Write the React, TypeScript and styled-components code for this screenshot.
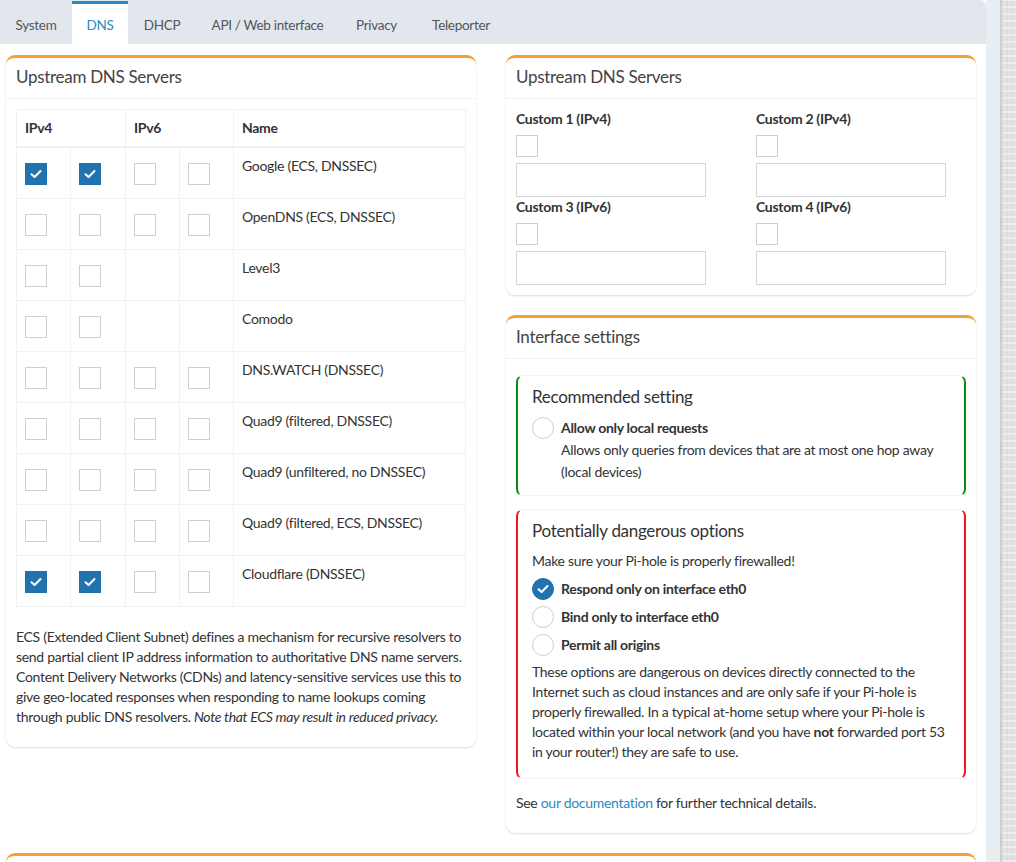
import * as React from "react";
import styled, { createGlobalStyle } from "styled-components";

const GlobalStyle = createGlobalStyle`
  html, body {
    margin: 0;
    padding: 0;
  }
  body {
    font-family: "Source Sans Pro", Lato, "Liberation Sans", sans-serif;
    font-size: 14px;
    line-height: 20px;
    letter-spacing: -0.3px;
    color: #333;
    background: #fff;
  }
  * {
    box-sizing: border-box;
  }
`;

const Page = styled.div`
  display: flex;
  width: 1016px;
  height: 862px;
  overflow: hidden;
`;

const Main = styled.div`
  width: 986px;
  background: #fff;
`;

const Gutter = styled.div`
  width: 14px;
  background: #e9eef3;
`;

const ScrollStrip = styled.div`
  width: 16px;
  border-left: 2px solid #cfcfcf;
  background-color: #e2e2e2;
  background-image: repeating-linear-gradient(
      0deg,
      rgba(255, 255, 255, 0.4) 0 2px,
      transparent 2px 7px
    ),
    repeating-linear-gradient(90deg, rgba(0, 0, 0, 0.05) 0 1px, transparent 1px 5px);
`;

const TabBar = styled.div`
  display: flex;
  height: 44px;
  background: #e2e7ee;
  border-top-right-radius: 6px;
`;

const Tab = styled.div<{ $w: number; $active?: boolean }>`
  width: ${(p) => p.$w}px;
  display: flex;
  align-items: center;
  justify-content: center;
  margin-top: 1px;
  padding-top: 1px;
  font-size: 13.5px;
  color: ${(p) => (p.$active ? "#2a8bc0" : "#555")};
  background: ${(p) => (p.$active ? "#fff" : "transparent")};
  border-top: 3px solid ${(p) => (p.$active ? "#2a8bc0" : "transparent")};
`;

const Content = styled.div`
  display: grid;
  grid-template-columns: 470px 470px;
  column-gap: 30px;
  row-gap: 20px;
  padding: 11px 0 0 6px;
  align-items: start;
`;

const Column = styled.div`
  display: flex;
  flex-direction: column;
  gap: 20px;
`;

const Box = styled.div<{ $wide?: boolean }>`
  background: #fff;
  border-top: 3px solid #f59f32;
  border-radius: 9px;
  box-shadow: 0 1px 2px rgba(0, 0, 0, 0.14);
  grid-column: ${(p) => (p.$wide ? "1 / span 2" : "auto")};
  min-height: ${(p) => (p.$wide ? "60px" : "0")};
`;

const BoxHeader = styled.div`
  padding: 8px 10px 10px;
  font-size: 17px;
  line-height: 22px;
  color: #444;
  border-bottom: 1px solid #f1f1f1;
`;

const BoxBody = styled.div`
  padding: 10px;
`;

const Table = styled.table`
  width: 450px;
  border-collapse: collapse;
  margin-bottom: 20px;
  border: 1px solid #f1f1f1;
`;

const Th = styled.th`
  text-align: left;
  padding: 8px;
  font-weight: 700;
  color: #333;
  border: 1px solid #f1f1f1;
  border-bottom: 2px solid #f1f1f1;
`;

const Td = styled.td<{ $w?: number }>`
  padding: 8px;
  vertical-align: top;
  border: 1px solid #f1f1f1;
  width: ${(p) => (p.$w ? `${p.$w}px` : "auto")};
`;

const Check = styled.span<{ $on?: boolean }>`
  display: flex;
  align-items: center;
  justify-content: center;
  width: 22px;
  height: 22px;
  margin: 7px 0 5px;
  border: 1px solid ${(p) => (p.$on ? "#1f6fa9" : "#d3cec7")};
  background: ${(p) => (p.$on ? "#2173b0" : "#fff")};
`;

const Radio = styled.span<{ $on?: boolean }>`
  flex: none;
  display: flex;
  align-items: center;
  justify-content: center;
  width: 22px;
  height: 22px;
  border-radius: 50%;
  border: 1px solid ${(p) => (p.$on ? "#1f6fa9" : "#d3cec7")};
  background: ${(p) => (p.$on ? "#2173b0" : "#fff")};
`;

const Tick = () => (
  <svg width="12" height="10" viewBox="0 0 12 10">
    <path
      d="M1.5 5.2 L4.6 8 L10.5 2"
      fill="none"
      stroke="#fff"
      strokeWidth="2"
      strokeLinecap="round"
      strokeLinejoin="round"
    />
  </svg>
);

const Note = styled.p`
  margin: 0 0 10px;
  white-space: nowrap;
`;

const CustomGrid = styled.div`
  display: grid;
  grid-template-columns: 240px 240px;
`;

const CustomField = styled.div`
  display: flex;
  flex-direction: column;
`;

const FieldLabel = styled.div`
  font-weight: 700;
  font-size: 14px;
  line-height: 20px;
  color: #333;
`;

const FieldCheck = styled(Check)`
  margin: 6px 0 6px;
`;

const TextInput = styled.div`
  width: 190px;
  height: 34px;
  border: 1px solid #d2d6de;
`;

const Callout = styled.div<{ $color: string; $top: number; $bottom: number }>`
  margin-top: ${(p) => p.$top}px;
  border: 1px solid #f2f2f2;
  border-left: 2px solid ${(p) => p.$color};
  border-right: 2px solid ${(p) => p.$color};
  border-radius: 7px;
  padding: 10px 14px ${(p) => p.$bottom}px;
  white-space: nowrap;
`;

const CalloutTitle = styled.div`
  font-size: 17px;
  line-height: 22px;
  color: #333;
  margin-bottom: 9px;
`;

const OptionRow = styled.div`
  display: flex;
  gap: 7px;
  margin-bottom: 6px;

  &:last-child {
    margin-bottom: 0;
  }
`;

const OptionText = styled.div`
  display: flex;
  flex-direction: column;
`;

const OptionLabel = styled.div`
  font-weight: 700;
  line-height: 22px;
`;

const OptionDesc = styled.div`
  line-height: 22px;
`;

const Plain = styled.p`
  margin: 0;
  line-height: 20px;
`;

const Warning = styled.p`
  margin: 0 0 7px;
  line-height: 20px;
`;

const Link = styled.a`
  color: #2a8bc0;
  text-decoration: none;
`;

const Footer = styled.p`
  margin: 14px 0 10px;
  line-height: 20px;
`;

type Server = { name: string; v4: [boolean, boolean]; v6: [boolean, boolean] | null };

const servers: Server[] = [
  { name: "Google (ECS, DNSSEC)", v4: [true, true], v6: [false, false] },
  { name: "OpenDNS (ECS, DNSSEC)", v4: [false, false], v6: [false, false] },
  { name: "Level3", v4: [false, false], v6: null },
  { name: "Comodo", v4: [false, false], v6: null },
  { name: "DNS.WATCH (DNSSEC)", v4: [false, false], v6: [false, false] },
  { name: "Quad9 (filtered, DNSSEC)", v4: [false, false], v6: [false, false] },
  { name: "Quad9 (unfiltered, no DNSSEC)", v4: [false, false], v6: [false, false] },
  { name: "Quad9 (filtered, ECS, DNSSEC)", v4: [false, false], v6: [false, false] },
  { name: "Cloudflare (DNSSEC)", v4: [true, true], v6: [false, false] },
];

const tabs = [
  { label: "System", w: 72 },
  { label: "DNS", w: 56, active: true },
  { label: "DHCP", w: 68 },
  { label: "API / Web interface", w: 143 },
  { label: "Privacy", w: 75 },
  { label: "Teleporter", w: 94 },
];

const customs = ["Custom 1 (IPv4)", "Custom 2 (IPv4)", "Custom 3 (IPv6)", "Custom 4 (IPv6)"];

const Box1 = ({ on }: { on: boolean }) => <Check $on={on}>{on && <Tick />}</Check>;

export default function App() {
  return (
    <Page>
      <GlobalStyle />
      <Main>
        <TabBar>
          {tabs.map((t) => (
            <Tab key={t.label} $w={t.w} $active={t.active}>
              {t.label}
            </Tab>
          ))}
        </TabBar>
        <Content>
          <Box>
            <BoxHeader>Upstream DNS Servers</BoxHeader>
            <BoxBody>
              <Table>
                <thead>
                  <tr>
                    <Th colSpan={2}>IPv4</Th>
                    <Th colSpan={2}>IPv6</Th>
                    <Th>Name</Th>
                  </tr>
                </thead>
                <tbody>
                  {servers.map((s) => (
                    <tr key={s.name}>
                      <Td $w={54}>
                        <Box1 on={s.v4[0]} />
                      </Td>
                      <Td $w={55}>
                        <Box1 on={s.v4[1]} />
                      </Td>
                      <Td $w={54}>{s.v6 && <Box1 on={s.v6[0]} />}</Td>
                      <Td $w={54}>{s.v6 && <Box1 on={s.v6[1]} />}</Td>
                      <Td>{s.name}</Td>
                    </tr>
                  ))}
                </tbody>
              </Table>
              <Note>
                ECS (Extended Client Subnet) defines a mechanism for recursive resolvers to
                <br />
                send partial client IP address information to authoritative DNS name servers.
                <br />
                Content Delivery Networks (CDNs) and latency-sensitive services use this to
                <br />
                give geo-located responses when responding to name lookups coming
                <br />
                through public DNS resolvers. <em>Note that ECS may result in reduced privacy.</em>
              </Note>
            </BoxBody>
          </Box>

          <Column>
            <Box>
              <BoxHeader>Upstream DNS Servers</BoxHeader>
              <BoxBody>
                <CustomGrid>
                  {customs.map((l) => (
                    <CustomField key={l}>
                      <FieldLabel>{l}</FieldLabel>
                      <FieldCheck />
                      <TextInput />
                    </CustomField>
                  ))}
                </CustomGrid>
              </BoxBody>
            </Box>

            <Box>
              <BoxHeader>Interface settings</BoxHeader>
              <BoxBody>
                <Callout $color="#0a8a12" $top={6} $bottom={12}>
                  <CalloutTitle>Recommended setting</CalloutTitle>
                  <OptionRow>
                    <Radio />
                    <OptionText>
                      <OptionLabel>Allow only local requests</OptionLabel>
                      <OptionDesc>
                        Allows only queries from devices that are at most one hop away
                        <br />
                        (local devices)
                      </OptionDesc>
                    </OptionText>
                  </OptionRow>
                </Callout>
                <Callout $color="#f0141e" $top={13} $bottom={16}>
                  <CalloutTitle>Potentially dangerous options</CalloutTitle>
                  <Warning>Make sure your Pi-hole is properly firewalled!</Warning>
                  <OptionRow>
                    <Radio $on>
                      <Tick />
                    </Radio>
                    <OptionLabel>Respond only on interface eth0</OptionLabel>
                  </OptionRow>
                  <OptionRow>
                    <Radio />
                    <OptionLabel>Bind only to interface eth0</OptionLabel>
                  </OptionRow>
                  <OptionRow>
                    <Radio />
                    <OptionLabel>Permit all origins</OptionLabel>
                  </OptionRow>
                  <Plain>
                    These options are dangerous on devices directly connected to the
                    <br />
                    Internet such as cloud instances and are only safe if your Pi-hole is
                    <br />
                    properly firewalled. In a typical at-home setup where your Pi-hole is
                    <br />
                    located within your local network (and you have <b>not</b> forwarded port 53
                    <br />
                    in your router!) they are safe to use.
                  </Plain>
                </Callout>
                <Footer>
                  See <Link href="#">our documentation</Link> for further technical details.
                </Footer>
              </BoxBody>
            </Box>
          </Column>

          <Box $wide />
        </Content>
      </Main>
      <Gutter />
      <ScrollStrip />
    </Page>
  );
}
